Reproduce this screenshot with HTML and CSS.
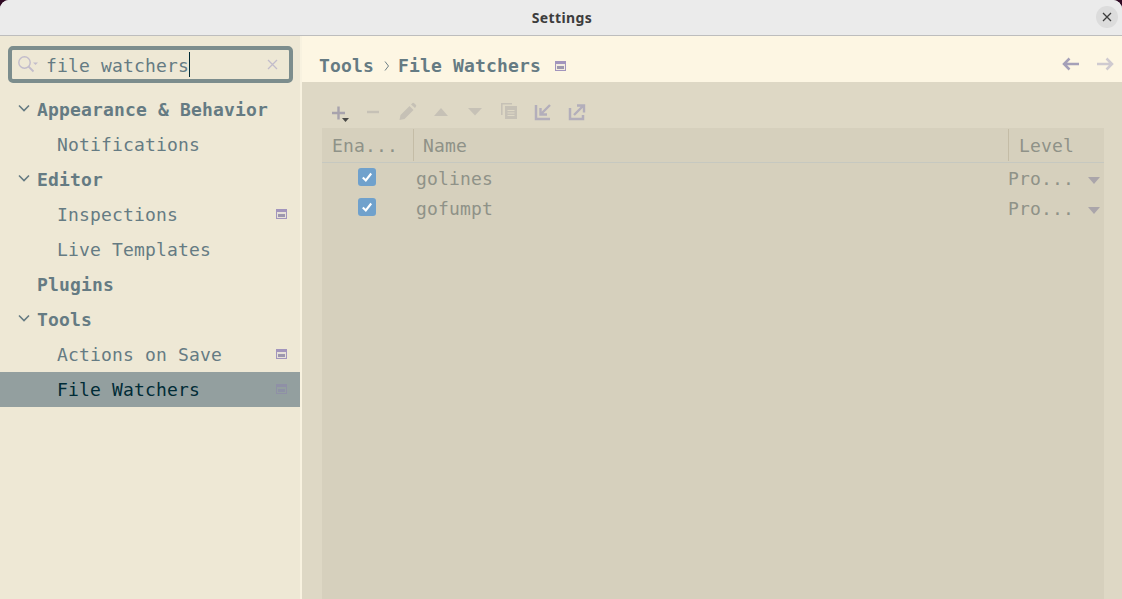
FILE: index.html
```html
<!DOCTYPE html>
<html lang="en">
<head>
    <meta charset="UTF-8">
    <meta name="viewport" content="width=device-width, initial-scale=1.0">
    <title>Settings</title>
    <link rel="stylesheet" href="styles.css">
</head>
<body>
    <div class="window">
        <header class="titlebar">
            <span class="title">Settings</span>
            <button class="close-btn" type="button" aria-label="Close">
                <svg width="10" height="10" viewBox="0 0 10 10"><path d="M1 1l8 8M9 1l-8 8" stroke="#3d3d3d" stroke-width="1.3" fill="none"/></svg>
            </button>
        </header>

        <div class="main">
            <aside class="sidebar">
                <div class="search">
                    <svg class="search-icon" width="20" height="18" viewBox="0 0 20 18">
                        <circle cx="6.500" cy="6.500" r="5.700" fill="none" stroke="#c2bccb" stroke-width="1.400"/>
                        <path d="M10.500 10.500l5 5" stroke="#c2bccb" stroke-width="1.800" fill="none"/>
                        <path d="M15 6.500h5l-2.500 2.600z" fill="#c2bccb"/>
                    </svg>
                    <span class="search-text">file watchers</span><span class="caret"></span>
                    <svg class="search-clear" width="11" height="11" viewBox="0 0 11 11"><path d="M1 1l9 9M10 1l-9 9" stroke="#c2bccb" stroke-width="1.300" fill="none"/></svg>
                </div>

                <ul class="tree">
                    <li class="row group"><svg class="chevron" width="12" height="8" viewBox="0 0 12 8"><path d="M1 1.500L6 6.500l5-5" stroke="#657b83" stroke-width="1.600" fill="none"/></svg>Appearance &amp; Behavior</li>
                    <li class="row child">Notifications</li>
                    <li class="row group"><svg class="chevron" width="12" height="8" viewBox="0 0 12 8"><path d="M1 1.500L6 6.500l5-5" stroke="#657b83" stroke-width="1.600" fill="none"/></svg>Editor</li>
                    <li class="row child">Inspections
                        <svg class="marker" width="11" height="10" viewBox="0 0 11 10"><rect width="11" height="10" fill="#a295bd"/><rect x="1" y="3" width="9" height="6" fill="#e6e0d8"/><rect x="2" y="5" width="7" height="3" fill="#9d97ae"/></svg>
                    </li>
                    <li class="row child">Live Templates</li>
                    <li class="row group no-arrow">Plugins</li>
                    <li class="row group"><svg class="chevron" width="12" height="8" viewBox="0 0 12 8"><path d="M1 1.500L6 6.500l5-5" stroke="#657b83" stroke-width="1.600" fill="none"/></svg>Tools</li>
                    <li class="row child">Actions on Save
                        <svg class="marker" width="11" height="10" viewBox="0 0 11 10"><rect width="11" height="10" fill="#a295bd"/><rect x="1" y="3" width="9" height="6" fill="#e6e0d8"/><rect x="2" y="5" width="7" height="3" fill="#9d97ae"/></svg>
                    </li>
                    <li class="row child selected">File Watchers
                        <svg class="marker" width="11" height="10" viewBox="0 0 11 10"><rect width="11" height="10" fill="#8f90a6"/><rect x="1" y="3" width="9" height="6" fill="#939f9f"/><rect x="2" y="5" width="7" height="3" fill="#8d91a5"/></svg>
                    </li>
                </ul>
            </aside>

            <section class="content">
                <div class="crumbs">
                    <span>Tools</span>
                    <svg class="crumb-sep" width="6" height="10" viewBox="0 0 6 10"><path d="M1 .5L4.500 5 1 9.500" stroke="#6d7f85" stroke-width="1" fill="none"/></svg>
                    <span>File Watchers</span>
                    <svg class="marker-inline" width="11" height="10" viewBox="0 0 11 10"><rect width="11" height="10" fill="#a295bd"/><rect x="1" y="3" width="9" height="6" fill="#f3ecdf"/><rect x="2" y="5" width="7" height="3" fill="#9d97ae"/></svg>
                    <div class="nav">
                        <svg width="18" height="14" viewBox="0 0 18 14"><path d="M18 7H3M8.500 1.500L3 7l5.500 5.500" stroke="#a5a0b8" stroke-width="2.500" fill="none"/></svg>
                        <svg width="18" height="14" viewBox="0 0 18 14"><path d="M0 7h15M9.500 1.500L15 7l-5.500 5.500" stroke="#cfcad0" stroke-width="2.500" fill="none"/></svg>
                    </div>
                </div>

                <div class="panel">
                    <div class="toolbar">
                        <svg width="20" height="20" viewBox="0 0 20 20"><path d="M3 11h13M9.500 4.500v13" stroke="#a8a3ad" stroke-width="2.400" fill="none"/><path d="M13 16h7l-3.500 4z" fill="#4a4a48"/></svg>
                        <svg width="20" height="20" viewBox="0 0 20 20"><path d="M4 10h12" stroke="#c6c1b6" stroke-width="2.400" fill="none"/></svg>
                        <svg width="20" height="20" viewBox="0 0 20 20"><path d="M2.500 18l1-5 9-9 4 4-9 9zM14 2.500L15.500 1a1 1 0 0 1 1.400 0L19 3a1 1 0 0 1 0 1.400L18 6z" fill="#c6c1b6"/></svg>
                        <svg width="20" height="20" viewBox="0 0 20 20"><path d="M3 14l7-8 7 8z" fill="#c6c1b6"/></svg>
                        <svg width="20" height="20" viewBox="0 0 20 20"><path d="M3 6h14l-7 7.500z" fill="#c6c1b6"/></svg>
                        <svg width="20" height="20" viewBox="0 0 20 20"><path d="M2.800 13V1.800H13" stroke="#c6c1b6" stroke-width="1.600" fill="none"/><rect x="6" y="4" width="12" height="13" fill="#c6c1b6"/><path d="M8.500 8.500h7M8.500 11h7M8.500 13.500h7" stroke="#ded8c5" stroke-width="1" fill="none"/></svg>
                        <svg width="20" height="20" viewBox="0 0 20 20"><path d="M3 3v14h14" stroke="#b3aebb" stroke-width="2.500" fill="none"/><path d="M17 3L8 12M7.500 6v6.500H14" stroke="#b3aebb" stroke-width="2.400" fill="none"/></svg>
                        <svg width="20" height="20" viewBox="0 0 20 20"><path d="M3 6v11h13v-4" stroke="#b3aebb" stroke-width="2.500" fill="none"/><path d="M7 13l9.500-9.500M10 3.500h7v7" stroke="#b3aebb" stroke-width="2.400" fill="none"/></svg>
                    </div>

                    <div class="table">
                        <div class="thead">
                            <div class="th">Ena...</div>
                            <div class="th">Name</div>
                            <div class="th th-level">Level</div>
                        </div>
                        <div class="tr">
                            <div class="td-check"><span class="checkbox"><svg width="12" height="12" viewBox="0 0 12 12"><path d="M1.800 6.500L4.800 9.500 10.200 2.500" stroke="#fff" stroke-width="2.100" fill="none"/></svg></span></div>
                            <div>golines</div>
                            <div class="td-level">Pro...<span class="dropdown"></span></div>
                        </div>
                        <div class="tr">
                            <div class="td-check"><span class="checkbox"><svg width="12" height="12" viewBox="0 0 12 12"><path d="M1.800 6.500L4.800 9.500 10.200 2.500" stroke="#fff" stroke-width="2.100" fill="none"/></svg></span></div>
                            <div>gofumpt</div>
                            <div class="td-level">Pro...<span class="dropdown"></span></div>
                        </div>
                    </div>
                </div>
            </section>
        </div>
    </div>
</body>
</html>
```

FILE: styles.css
```css
* {
    box-sizing: border-box;
}

html, body {
    height: 100%;
}

body {
    margin: 0;
    background: #300a24;
    font-family: "DejaVu Sans Mono", monospace;
    font-size: 18px;
    letter-spacing: 0.16px;
    overflow: hidden;
}

.window {
    height: 599px;
    display: flex;
    flex-direction: column;
    background: #ebebeb;
    border-radius: 9px 9px 0 0;
    overflow: hidden;
}

.titlebar {
    flex: 0 0 36px;
    position: relative;
    display: flex;
    align-items: center;
    justify-content: center;
    padding-left: 2px;
    background: #ebebeb;
    border-bottom: 1px solid #bdbdbd;
}

.title {
    font-family: "Noto Sans", sans-serif;
    font-size: 14px;
    font-weight: 700;
    letter-spacing: 0.4px;
    color: #3d3d3d;
}

.close-btn {
    position: absolute;
    right: 4px;
    top: 6px;
    width: 22px;
    height: 22px;
    padding: 0;
    border: none;
    border-radius: 50%;
    background: #dcdcdc;
    display: flex;
    align-items: center;
    justify-content: center;
}

.main {
    flex: 1;
    display: flex;
    min-height: 0;
}

/* left tree */
.sidebar {
    flex: 0 0 302px;
    background: #eee8d5;
    border-right: 2px solid #f8f2e0;
    padding: 10px 0 0;
}

.search {
    height: 37px;
    margin: 0 7px 0 8px;
    padding: 0 0 0 6px;
    display: flex;
    align-items: center;
    border: 4px solid #7c8d8d;
    border-radius: 5px;
    color: #657b83;
    position: relative;
}

.search-icon {
    flex: none;
    margin-right: 8px;
}

.search-text {
    line-height: 1;
    margin-top: 2px;
}

.caret {
    width: 1px;
    height: 25px;
    background: #002b36;
}

.search-clear {
    position: absolute;
    right: 11px;
    top: 9px;
}

.tree {
    list-style: none;
    margin: 9px 0 0;
    padding: 0;
    width: 300px;
}

.row {
    height: 35px;
    display: flex;
    align-items: center;
    position: relative;
    color: #657b83;
}

.group {
    font-weight: 700;
    padding-left: 18px;
}

.chevron {
    flex: none;
    margin: -3px 7px 0 0;
}

.no-arrow {
    padding-left: 37px;
}

.child {
    padding-left: 57px;
}

.selected {
    background: #939f9f;
    color: #002b36;
}

.marker {
    position: absolute;
    left: 276px;
    top: 12px;
}

/* right side */
.content {
    flex: 1;
    min-width: 0;
    display: flex;
    flex-direction: column;
    background: #ded8c5;
}

.crumbs {
    flex: 0 0 46px;
    display: flex;
    align-items: center;
    padding: 13px 7px 0 17px;
    background: #fdf6e3;
    color: #657b83;
    font-weight: 700;
}

.crumb-sep {
    margin: 0 8px 0 10px;
}

.marker-inline {
    margin-left: 14px;
}

.nav {
    margin: -3px 0 0 auto;
    display: flex;
    gap: 18px;
}

.panel {
    flex: 1;
    min-height: 0;
    padding: 0 18px 0 20px;
    display: flex;
    flex-direction: column;
}

.toolbar {
    flex: 0 0 46px;
    display: flex;
    align-items: center;
    gap: 14px;
    padding: 14px 0 0 7px;
}

.table {
    flex: 1;
    background: #d6d0bd;
    color: #8f9288;
}

.thead, .tr {
    display: grid;
    grid-template-columns: 91px 595px 96px;
}

.thead {
    height: 35px;
    border-bottom: 1px solid #c6c8c0;
    align-items: center;
}

.th {
    height: 32px;
    display: flex;
    align-items: center;
    padding-left: 9px;
    border-left: 1px solid #c4bca6;
}

.th:first-child {
    border-left: none;
    padding-left: 10px;
}

.th-level {
    padding-left: 10px;
}

.tr {
    height: 30px;
    align-items: center;
}

.td-check {
    padding-left: 37px;
    display: flex;
    margin: -2px 0 0 -1px;
}

.checkbox {
    width: 18px;
    height: 18px;
    border-radius: 3px;
    background: #70a1cc;
    display: flex;
    align-items: center;
    justify-content: center;
}

.tr > div:nth-child(2) {
    padding-left: 3px;
}

.td-level {
    position: relative;
}

.dropdown {
    position: absolute;
    right: 4px;
    top: 9px;
    width: 0;
    height: 0;
    border-left: 6px solid transparent;
    border-right: 6px solid transparent;
    border-top: 7px solid #aaa5aa;
}
```
